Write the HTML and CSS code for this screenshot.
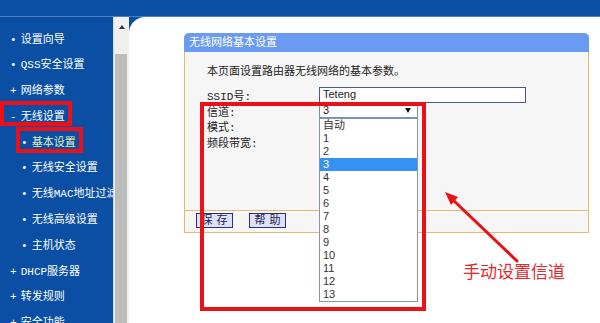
FILE: index.html
```html
<!DOCTYPE html>
<html lang="zh-CN">
<head>
<meta charset="utf-8">
<title>无线网络基本设置</title>
<link rel="stylesheet" href="styles.css">
</head>
<body>
<div class="topbar"></div>
<div class="frame">
  <nav class="side">
    <div class="item"><span class="b">•</span>设置向导</div>
    <div class="item"><span class="b">•</span>QSS安全设置</div>
    <div class="item"><span class="b">+</span>网络参数</div>
    <div class="item"><span class="b">-</span>无线设置</div>
    <div class="item sub active"><span class="b">•</span>基本设置</div>
    <div class="item sub"><span class="b">•</span>无线安全设置</div>
    <div class="item sub"><span class="b">•</span>无线MAC地址过滤</div>
    <div class="item sub"><span class="b">•</span>无线高级设置</div>
    <div class="item sub"><span class="b">•</span>主机状态</div>
    <div class="item"><span class="b">+</span>DHCP服务器</div>
    <div class="item"><span class="b">+</span>转发规则</div>
    <div class="item"><span class="b">+</span>安全功能</div>
  </nav>
  <div class="scroll">
    <div class="sb-up"><span class="sb-arrow"></span></div>
    <div class="sb-thumb"></div>
  </div>
  <main class="main">
    <section class="panel">
      <div class="panel-head">无线网络基本设置</div>
      <div class="panel-body">
        <p class="desc">本页面设置路由器无线网络的基本参数。</p>
        <div class="row"><span class="label">SSID号:</span><span class="input ssid">Teteng</span></div>
        <div class="row"><span class="label">信道:</span>
          <span class="select"><span class="sel-val">3</span><span class="sel-arrow"></span>
            <span class="list">
              <span class="opt">自动</span>
              <span class="opt">1</span>
              <span class="opt">2</span>
              <span class="opt on">3</span>
              <span class="opt">4</span>
              <span class="opt">5</span>
              <span class="opt">6</span>
              <span class="opt">7</span>
              <span class="opt">8</span>
              <span class="opt">9</span>
              <span class="opt">10</span>
              <span class="opt">11</span>
              <span class="opt">12</span>
              <span class="opt">13</span>
            </span>
          </span>
        </div>
        <div class="row"><span class="label">模式:</span></div>
        <div class="row"><span class="label">频段带宽:</span></div>
      </div>
      <div class="panel-foot">
        <span class="btn">保存</span>
        <span class="btn">帮助</span>
      </div>
    </section>
  </main>
</div>

<div class="mark mark-1"></div>
<div class="mark mark-2"></div>
<div class="mark mark-3"></div>
<svg class="arrow" width="600" height="323" viewBox="0 0 600 323">
  <line x1="517" y1="261" x2="452" y2="199" stroke="#e81212" stroke-width="3" stroke-linecap="round"/>
  <polygon points="445,192 458,197 451,205" fill="#e81212"/>
</svg>
<div class="note">手动设置信道</div>
</body>
</html>
```

FILE: styles.css
```css
html, body {
  margin: 0;
  padding: 0;
}
body {
  position: relative;
  width: 600px;
  height: 323px;
  overflow: hidden;
  background: #0a4fa4;
  font-family: "Liberation Mono", "Noto Sans CJK SC", monospace;
  font-size: 11px;
  color: #222;
}
.topbar {
  height: 17px;
  border-bottom: 1px solid #4d7fc4;
  box-sizing: border-box;
}
.frame {
  display: flex;
  height: 306px;
}
.side {
  width: 113px;
  flex: none;
  overflow: hidden;
  padding-top: 10.5px;
  color: #fff;
  white-space: nowrap;
}
.item {
  height: 25.8px;
  line-height: 25.8px;
  padding-left: 10px;
}
.item.sub {
  padding-left: 21px;
}
.item.active {
  color: #e4eeb2;
}
.b {
  display: inline-block;
  width: 10.7px;
  color: #fff;
}
.scroll {
  width: 16px;
  flex: none;
  display: flex;
  flex-direction: column;
  background: #efefef;
  border-left: 1px solid #d8d8d8;
  box-sizing: border-box;
}
.sb-up {
  height: 37px;
  display: flex;
  justify-content: center;
  padding-top: 8px;
  box-sizing: border-box;
}
.sb-arrow {
  width: 0;
  height: 0;
  border-left: 3px solid transparent;
  border-right: 3px solid transparent;
  border-bottom: 4px solid #333;
}
.sb-thumb {
  flex: 1;
  background: #bcbcbc;
  margin: 0 2px 0 1px;
}
.main {
  flex: 1;
  background: #fff;
  border-top-left-radius: 16px;
  padding: 16px 0 0 55px;
}
.panel {
  width: 405px;
  border: 1px solid #e6b872;
  border-top: none;
  border-radius: 5px 5px 0 0;
  box-sizing: border-box;
  background: #f6f6f6;
}
.panel-head {
  height: 19px;
  box-sizing: border-box;
  padding-top: 2px;
  line-height: 17px;
  background: #6a9bf0;
  color: #fff;
  padding-left: 5px;
  border-radius: 5px 5px 0 0;
  margin: 0 -1px;
}
.panel-body {
  height: 159px;
  padding: 13px 0 0 22px;
  box-sizing: border-box;
  border-bottom: 1px solid #e6b872;
}
.desc {
  margin: 0 0 7px 0;
  line-height: 15px;
}
.row {
  height: 15.6px;
  display: flex;
  align-items: flex-start;
}
.label {
  width: 112px;
  flex: none;
  padding-top: 3px;
  line-height: 14px;
}
.input, .select {
  height: 15.5px;
  box-sizing: border-box;
  background: #fff;
  border: 1px solid #4a5a86;
  font-family: "Liberation Sans", "Noto Sans CJK SC", sans-serif;
  font-size: 11px;
  line-height: 13px;
  padding-left: 3px;
  color: #222;
}
.ssid {
  width: 207px;
}
.select {
  position: relative;
  width: 99px;
  display: flex;
  justify-content: space-between;
  border-color: #7b8db3;
}
.sel-arrow {
  width: 0;
  height: 0;
  margin: 4px 6px 0 0;
  border-left: 3px solid transparent;
  border-right: 3px solid transparent;
  border-top: 5px solid #111;
}
.list {
  position: absolute;
  top: 14px;
  left: -1px;
  width: 99px;
  box-sizing: border-box;
  background: #fff;
  border: 1px solid #7f97b5;
  display: flex;
  flex-direction: column;
  z-index: 2;
}
.opt {
  height: 13px;
  line-height: 13px;
  padding-left: 3px;
  color: #333;
}
.opt.on {
  background: #3392f4;
  color: #fff;
}
.panel-foot {
  height: 21px;
  padding: 2px 0 0 11px;
  box-sizing: border-box;
  display: flex;
  gap: 16px;
}
.btn {
  width: 37px;
  height: 15px;
  box-sizing: border-box;
  border: 1px solid #27336e;
  background: #dde0f6;
  color: #1d2050;
  text-align: center;
  padding-top: 1px;
  line-height: 13px;
  letter-spacing: 4px;
  padding-left: 4px;
}
.mark {
  position: absolute;
  border: 4px solid #ec1118;
  box-sizing: border-box;
  z-index: 5;
}
.mark-1 { left: 0; top: 101px; width: 72px; height: 25px; }
.mark-2 { left: 16px; top: 127px; width: 67px; height: 26px; }
.mark-3 { left: 200px; top: 102px; width: 226px; height: 209px; }
.arrow {
  position: absolute;
  left: 0;
  top: 0;
  z-index: 6;
  pointer-events: none;
}
.note {
  position: absolute;
  left: 463px;
  top: 261px;
  font-family: "Noto Sans CJK SC", sans-serif;
  font-size: 17px;
  line-height: 19px;
  color: #e2282d;
  z-index: 6;
}
```
